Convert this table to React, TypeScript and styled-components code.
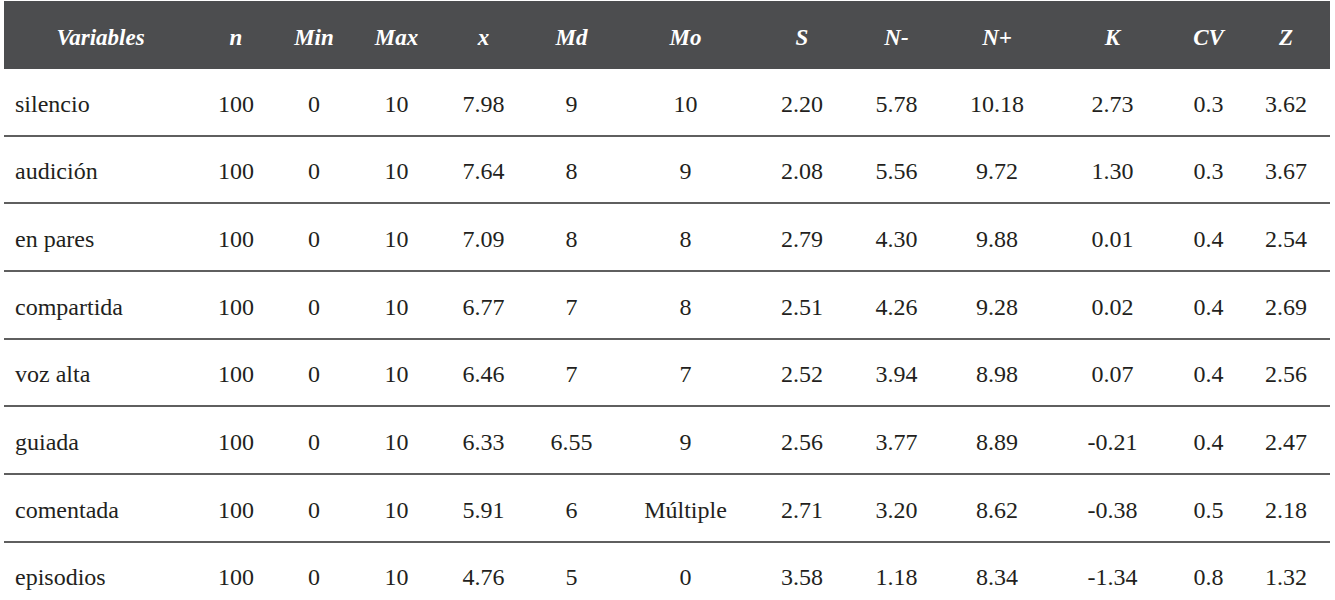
import React from "react";
import styled, { createGlobalStyle } from "styled-components";

const GlobalStyle = createGlobalStyle`
  html, body {
    margin: 0;
    padding: 0;
    background: #ffffff;
  }
  body {
    font-family: "Liberation Serif", "Times New Roman", serif;
    color: #231f20;
  }
`;

const serif = `"Liberation Serif", "DejaVu Serif", "Times New Roman", serif`;

const headers = ["Variables", "n", "Min", "Max", "x", "Md", "Mo", "S", "N-", "N+", "K", "CV", "Z"];

// column widths measured from the reference
const widths = [193, 78, 78, 87, 87, 89, 139, 94, 95, 106, 125, 67, 88];

const rows: string[][] = [
  ["silencio", "100", "0", "10", "7.98", "9", "10", "2.20", "5.78", "10.18", "2.73", "0.3", "3.62"],
  ["audición", "100", "0", "10", "7.64", "8", "9", "2.08", "5.56", "9.72", "1.30", "0.3", "3.67"],
  ["en pares", "100", "0", "10", "7.09", "8", "8", "2.79", "4.30", "9.88", "0.01", "0.4", "2.54"],
  ["compartida", "100", "0", "10", "6.77", "7", "8", "2.51", "4.26", "9.28", "0.02", "0.4", "2.69"],
  ["voz alta", "100", "0", "10", "6.46", "7", "7", "2.52", "3.94", "8.98", "0.07", "0.4", "2.56"],
  ["guiada", "100", "0", "10", "6.33", "6.55", "9", "2.56", "3.77", "8.89", "-0.21", "0.4", "2.47"],
  ["comentada", "100", "0", "10", "5.91", "6", "Múltiple", "2.71", "3.20", "8.62", "-0.38", "0.5", "2.18"],
  ["episodios", "100", "0", "10", "4.76", "5", "0", "3.58", "1.18", "8.34", "-1.34", "0.8", "1.32"],
];

export default function App() {
  return (
    <>
      <GlobalStyle />
      <Page>
        <Table>
          <colgroup>
            {widths.map((w, i) => (
              <col key={i} style={{ width: w }} />
            ))}
          </colgroup>
          <thead>
            <tr>
              {headers.map((h) => (
                <HeadCell key={h}>{h}</HeadCell>
              ))}
            </tr>
          </thead>
          <tbody>
            {rows.map((r) => (
              <tr key={r[0]}>
                {r.map((v, i) => (
                  <Cell key={i} $first={i === 0}>
                    {v}
                  </Cell>
                ))}
              </tr>
            ))}
          </tbody>
        </Table>
      </Page>
    </>
  );
}

const Page = styled.div`
  padding: 1px 0 0 4px;
`;

const Table = styled.table`
  width: 1326px;
  table-layout: fixed;
  border-collapse: separate;
  border-spacing: 0;
  font-family: ${serif};
`;

const HeadCell = styled.th`
  height: 68px;
  padding: 5px 0 0;
  box-sizing: border-box;
  background: #4c4d4f;
  color: #ffffff;
  font-family: ${serif};
  font-size: 23px;
  font-weight: bold;
  font-style: italic;
  text-align: center;
  vertical-align: middle;
`;

const Cell = styled.td<{ $first?: boolean }>`
  height: 67.67px;
  padding: 5px 0 0 ${(p) => (p.$first ? "11px" : "0")};
  box-sizing: border-box;
  border-bottom: 2px solid #5f5f5f;
  font-family: ${serif};
  font-size: 24px;
  color: #231f20;
  text-align: ${(p) => (p.$first ? "left" : "center")};
  vertical-align: middle;
  white-space: nowrap;
`;
